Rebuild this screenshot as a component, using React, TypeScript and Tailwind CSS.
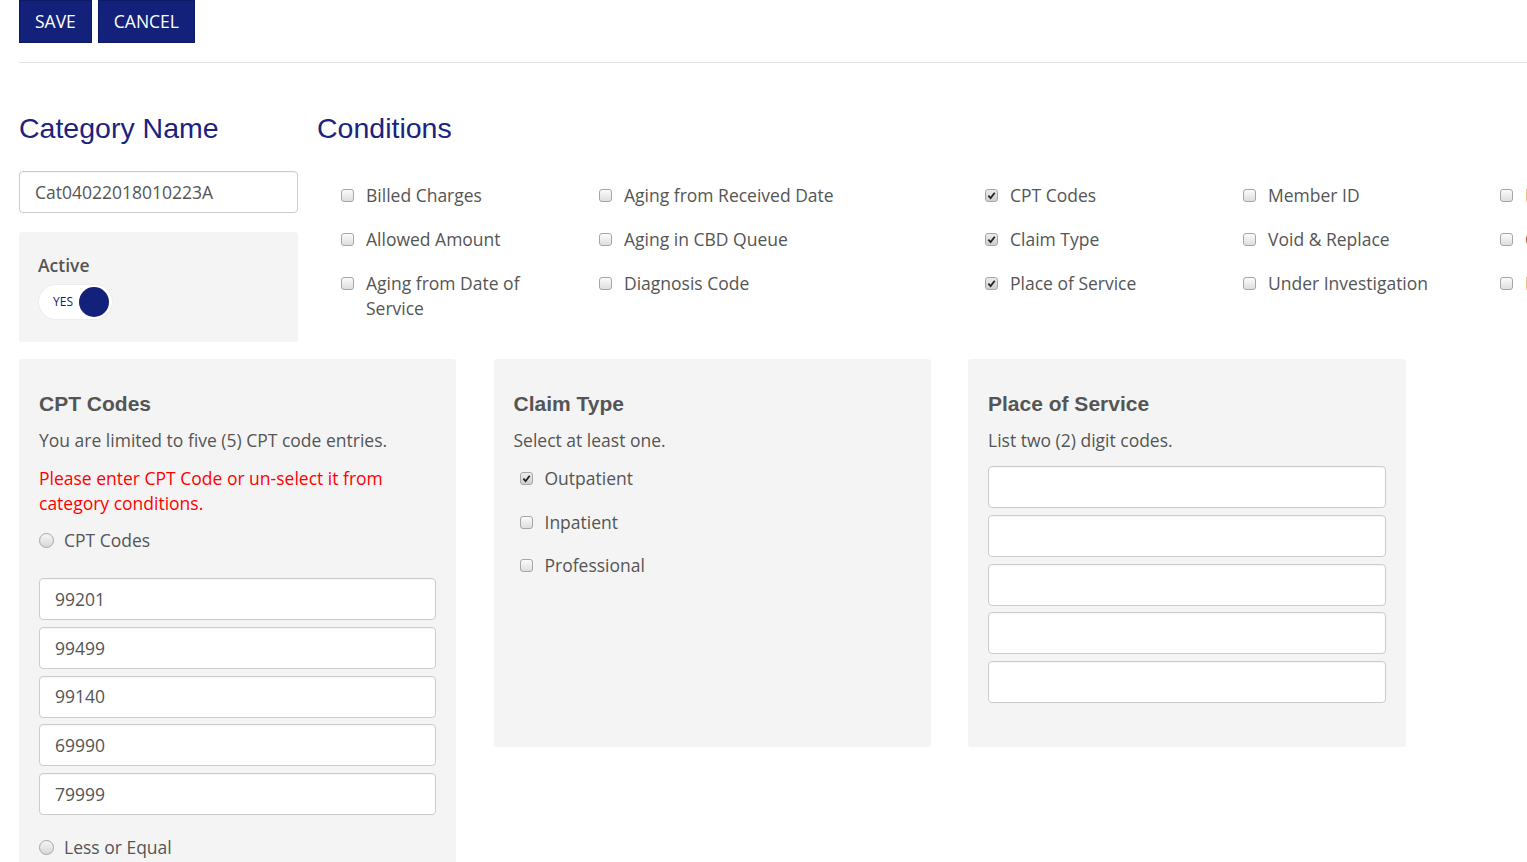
import React from 'react';

const body = { fontFamily: '"Open Sans", "Liberation Sans", sans-serif' };
const arial = { fontFamily: '"Liberation Sans", Arial, sans-serif' };

const Check = ({ checked = false }: { checked?: boolean }) => (
  <span
    className={`relative mt-[6px] inline-flex h-[13px] w-[13px] shrink-0 items-center justify-center rounded-[3px] border border-[#a6a6a6] bg-gradient-to-b ${
      checked ? 'from-[#ececec] to-[#cfcfcf]' : 'from-[#fbfbfb] to-[#dedede]'
    }`}
  >
    {checked && (
      <svg width="9" height="9" viewBox="0 0 10 10" className="absolute">
        <path d="M1.5 5.2 L4 7.8 L8.6 2" fill="none" stroke="#222" strokeWidth="2" />
      </svg>
    )}
  </span>
);

const Radio = () => (
  <span className="mt-[5px] inline-block h-[15px] w-[15px] shrink-0 rounded-full border border-[#a6a6a6] bg-gradient-to-b from-[#f6f6f6] to-[#d8d8d8]" />
);

const CheckItem = ({ label, checked }: { label: string; checked?: boolean }) => (
  <label className="flex items-start gap-[12px] text-[17.5px] leading-[25px]">
    <Check checked={checked} />
    <span>{label}</span>
  </label>
);

const TextBox = ({ value = '' }: { value?: string }) => (
  <div className="flex h-[42px] items-center rounded-[4px] border border-[#cccccc] bg-white px-[15px] text-[17.5px] text-[#555] shadow-[inset_0_1px_1px_rgba(0,0,0,0.04)]">
    {value}
  </div>
);

// five columns of category conditions; the last one runs past the window edge
const conditions: { label: string; checked?: boolean }[][] = [
  [{ label: 'Billed Charges' }, { label: 'Allowed Amount' }, { label: 'Aging from Date of Service' }],
  [{ label: 'Aging from Received Date' }, { label: 'Aging in CBD Queue' }, { label: 'Diagnosis Code' }],
  [{ label: 'CPT Codes', checked: true }, { label: 'Claim Type', checked: true }, { label: 'Place of Service', checked: true }],
  [{ label: 'Member ID' }, { label: 'Void & Replace' }, { label: 'Under Investigation' }],
  [{ label: 'Provider NPI' }, { label: 'COB' }, { label: 'Line of Business' }],
];

const colWidths = ['w-[258px]', 'w-[386px]', 'w-[258px]', 'w-[257px]', 'w-[200px]'];

const App = () => {
  return (
    <div className="h-[862px] w-[1527px] overflow-hidden bg-white pl-[19px] text-[#555]" style={body}>
      <div className="flex gap-[6px]">
        <button className="h-[43px] border border-[#0e1a66] bg-[#14217a] px-[15px] text-[17.5px] text-white">SAVE</button>
        <button className="h-[43px] border border-[#0e1a66] bg-[#14217a] px-[15px] text-[17.5px] text-white">CANCEL</button>
      </div>
      <div className="mt-[19px] border-t border-[#e2e2e2]" />

      <div className="mt-[48px] flex gap-[19px]">
        <div className="w-[279px] shrink-0">
          <h2 className="text-[28.5px] leading-[34px] text-[#1a237e]" style={arial}>Category Name</h2>
          <div className="mt-[26px]">
            <TextBox value="Cat04022018010223A" />
          </div>
          <div className="mt-[19px] h-[110px] rounded-[3px] bg-[#f4f4f4] px-[19px] pt-[21px]">
            <div className="text-[17.5px] font-semibold leading-[24px] text-[#555]">Active</div>
            <div className="ml-[1px] mt-[8px] flex h-[34px] w-[73px] items-center justify-between rounded-full bg-white pl-[14px] pr-[3px] shadow-[0_0_0_1px_#ececec]">
              <span className="text-[12px] text-[#14217a]">YES</span>
              <span className="h-[30px] w-[30px] rounded-full bg-[#14217a]" />
            </div>
          </div>
        </div>

        <div className="flex-1">
          <h2 className="text-[28.5px] leading-[34px] text-[#1a237e]" style={arial}>Conditions</h2>
          <div className="mt-[38px] flex pl-[24px]">
            {conditions.map((col, i) => (
              <div key={i} className={`${colWidths[i]} flex shrink-0 flex-col gap-[19px] pr-[30px]`}>
                {col.map((c) => (
                  <CheckItem key={c.label} label={c.label} checked={c.checked} />
                ))}
              </div>
            ))}
          </div>
        </div>
      </div>

      <div className="mt-[17px] flex items-start gap-[37.5px]">
        <div className="w-[437px] shrink-0 rounded-[3px] bg-[#f4f4f4] px-[20px] pb-[30px] pt-[33px]">
          <h3 className="text-[21px] font-bold leading-[24px] text-[#555]" style={arial}>CPT Codes</h3>
          <p className="mt-[12px] text-[17.5px] leading-[25px]">You are limited to five (5) CPT code entries.</p>
          <p className="mt-[13px] text-[17.5px] leading-[25px] text-[#ff0000]">Please enter CPT Code or un-select it from category conditions.</p>
          <label className="mt-[12px] flex items-start gap-[10px] text-[17.5px] leading-[25px]">
            <Radio />
            <span>CPT Codes</span>
          </label>
          <div className="mt-[25px] flex flex-col gap-[6.75px]">
            {['99201', '99499', '99140', '69990', '79999'].map((v) => (
              <TextBox key={v} value={v} />
            ))}
          </div>
          <label className="mt-[20px] flex items-start gap-[10px] text-[17.5px] leading-[25px]">
            <Radio />
            <span>Less or Equal</span>
          </label>
        </div>

        <div className="h-[388px] w-[437px] shrink-0 rounded-[3px] bg-[#f4f4f4] px-[20px] pt-[33px]">
          <h3 className="text-[21px] font-bold leading-[24px] text-[#555]" style={arial}>Claim Type</h3>
          <p className="mt-[12px] text-[17.5px] leading-[25px]">Select at least one.</p>
          <div className="mt-[13px] flex flex-col gap-[18.5px] pl-[6px]">
            <CheckItem label="Outpatient" checked />
            <CheckItem label="Inpatient" />
            <CheckItem label="Professional" />
          </div>
        </div>

        <div className="h-[388px] w-[438px] shrink-0 rounded-[3px] bg-[#f4f4f4] px-[20px] pt-[33px]">
          <h3 className="text-[21px] font-bold leading-[24px] text-[#555]" style={arial}>Place of Service</h3>
          <p className="mt-[12px] text-[17.5px] leading-[25px]">List two (2) digit codes.</p>
          <div className="mt-[13px] flex flex-col gap-[6.75px]">
            {[0, 1, 2, 3, 4].map((i) => (
              <TextBox key={i} />
            ))}
          </div>
        </div>
      </div>
    </div>
  );
};

export default App;
